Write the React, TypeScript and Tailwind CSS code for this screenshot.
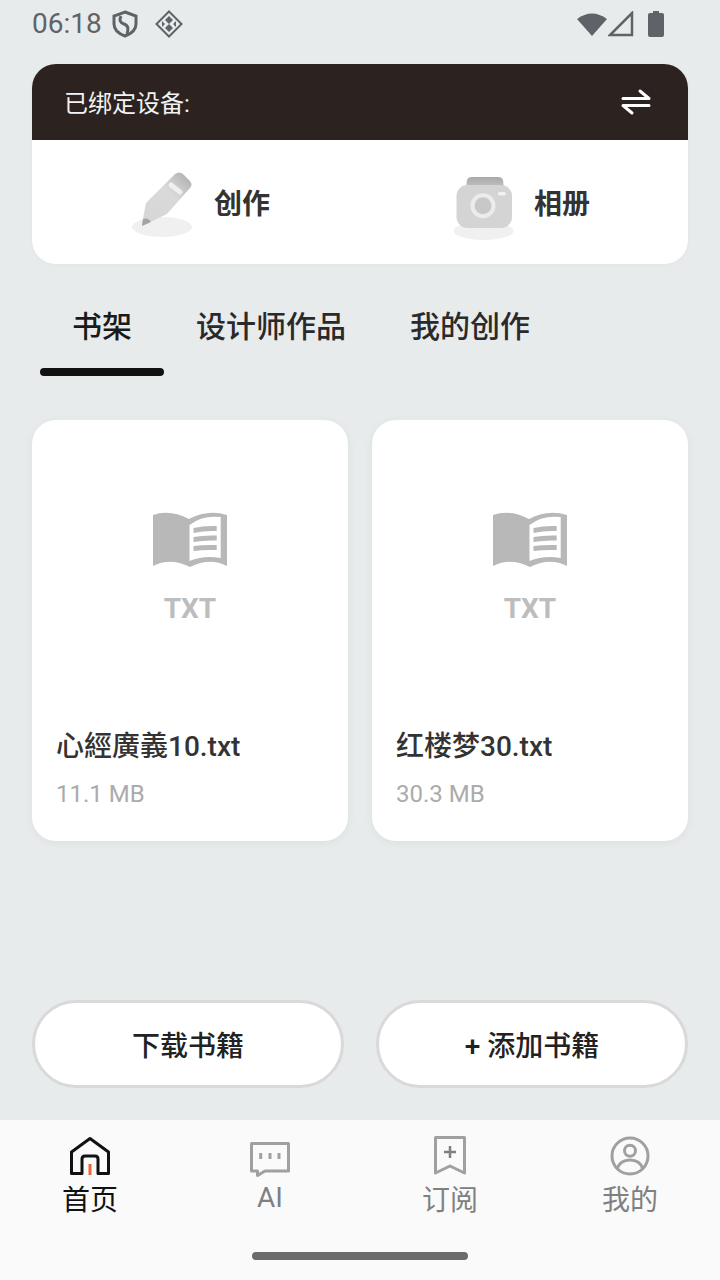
import React from 'react';

const font = { fontFamily: 'Roboto, "Noto Sans CJK SC", sans-serif' };

const PencilIcon = () => (
  <svg className="overflow-visible" width="64" height="70" viewBox="0 0 64 70">
    <defs>
      <linearGradient id="pencilBody" x1="0" y1="1" x2="1" y2="0">
        <stop offset="0" stopColor="#d6d6d6" />
        <stop offset="0.6" stopColor="#d9d9d9" />
        <stop offset="1" stopColor="#ababab" />
      </linearGradient>
    </defs>
    <ellipse cx="30" cy="60" rx="30" ry="10" fill="#f0f0f0" />
    <path d="M10 59 L10.5 54 L14 36 L43 7 Q47 4 51 7 L58 14 Q61 18 58 21 L35 47 Z" fill="url(#pencilBody)" />
    <path d="M10 59 L11 52 Q16 50 19 55 Z" fill="#a3a3a3" />
    <path d="M39 18 L48 25" stroke="#efefef" strokeWidth="5" strokeLinecap="round" />
  </svg>
);

const CameraIcon = () => (
  <svg className="overflow-visible" width="64" height="70" viewBox="0 0 64 70">
    <defs>
      <linearGradient id="cameraTop" x1="0" y1="0" x2="0" y2="1">
        <stop offset="0" stopColor="#a9a9a9" />
        <stop offset="1" stopColor="#c4c4c4" />
      </linearGradient>
    </defs>
    <ellipse cx="31.5" cy="64" rx="30" ry="9" fill="#f0f0f0" />
    <path d="M14 22 L15 13 Q16 10 20 10 L46 10 Q50 10 51 13 L52 22 Z" fill="url(#cameraTop)" />
    <rect x="4.5" y="18" width="55.5" height="43" rx="11" fill="#d4d4d4" />
    <circle cx="31" cy="38.7" r="12.5" fill="#ececec" />
    <circle cx="31" cy="38.7" r="8.5" fill="#c8c8c8" />
    <rect x="46" y="25" width="8" height="3.5" rx="1.7" fill="#f1f1f1" />
  </svg>
);

const BookIcon = () => (
  <svg width="76" height="60" viewBox="0 0 76 60">
    <path d="M1 6 Q18 0 37 10 Q56 0 75 6 L75 57 Q58 48 38 58 Q18 48 1 57 Z" fill="#b8b8b8" />
    <path d="M37.5 16 Q50 6 68.7 8 L68.7 49 Q52 46 37.5 52 Z" fill="#ffffff" />
    <path d="M41.5 19 Q52 16.5 64.7 17 L64.7 22 Q52 21.5 41.5 24 Z" fill="#b8b8b8" />
    <path d="M41.5 28 Q52 26 64.7 26.5 L64.7 31.5 Q52 31 41.5 33 Z" fill="#b8b8b8" />
    <path d="M41.5 37 Q52 35.5 64.7 36 L64.7 41 Q52 40.5 41.5 42 Z" fill="#b8b8b8" />
  </svg>
);

const BookCard = ({ name, size }: { name: string; size: string }) => (
  <div className="h-[421px] bg-white rounded-[24px] shadow-[0_2px_10px_rgba(0,0,0,0.05)] px-6 flex flex-col">
    <div className="pt-[89px] flex flex-col items-center">
      <BookIcon />
      <span className="mt-[23px] text-[28px] leading-[34px] font-bold text-[#bdbdbd]">TXT</span>
    </div>
    <p className="mt-[101px] text-[28px] leading-[40px] font-medium text-[#333333]">{name}</p>
    <p className="mt-[11px] text-[24px] leading-[32px] text-[#ababab]">{size}</p>
  </div>
);

const NavItem = ({ label, active, latin, children }: { label: string; active?: boolean; latin?: boolean; children: React.ReactNode }) => (
  <div className="flex-1 flex flex-col items-center">
    <div className="h-[44px] flex items-center justify-center">{children}</div>
    <span className={`${latin ? 'mt-0' : 'mt-[3px]'} text-[28px] leading-[38px] ${active ? 'text-[#111111]' : 'text-[#808080]'}`}>{label}</span>
  </div>
);

export default function App() {
  return (
    <div className="w-[720px] h-[1280px] bg-[#e8ebec] flex flex-col overflow-hidden" style={font}>
      {/* status bar */}
      <div className="h-[48px] pl-8 pr-[56px] flex items-center justify-between">
        <div className="flex items-center text-[#5f6368]">
          <span className="text-[28px] leading-[48px]">06:18</span>
          <svg className="ml-[10px]" width="26" height="28" viewBox="0 0 26 28" fill="none" stroke="#5f6368" strokeWidth="3">
            <path d="M13 2 L24 6 L24 14 Q24 22 13 26 Q2 22 2 14 L2 6 Z" />
            <path d="M9 6 Q6 12 12 14 Q18 16 15 24" />
          </svg>
          <svg className="ml-[17px]" width="28" height="28" viewBox="0 0 28 28" fill="none">
            <path d="M14 1.5 L26.5 14 L14 26.5 L1.5 14 Z" stroke="#5f6368" strokeWidth="2" />
            <path d="M14 6 L18 10 L14 14 L10 10 Z M14 14 L18 18 L14 22 L10 18 Z M7 11 L10 14 L7 17 Z M21 11 L18 14 L21 17 Z" fill="#5f6368" />
          </svg>
        </div>
        <div className="flex items-center">
          <svg width="32" height="26" viewBox="0 0 32 26">
            <path d="M16 25 L1 8 Q16 -3 31 8 Z" fill="#5f6368" />
          </svg>
          <svg width="26" height="26" viewBox="0 0 26 26" fill="none">
            <path d="M24 2 L24 24 L2 24 Z" stroke="#5f6368" strokeWidth="2.5" />
          </svg>
          <svg className="ml-[14px]" width="16" height="26" viewBox="0 0 16 26">
            <path d="M5 0 H11 V2 H14 Q16 2 16 4 V24 Q16 26 14 26 H2 Q0 26 0 24 V4 Q0 2 2 2 H5 Z" fill="#5f6368" />
          </svg>
        </div>
      </div>

      {/* device card */}
      <div className="mt-4 mx-8 h-[200px] bg-white rounded-[24px] overflow-hidden shadow-[0_1px_4px_rgba(0,0,0,0.03)]">
        <div className="h-[76px] bg-[#2c221f] pl-[32px] pr-[36px] flex items-center justify-between">
          <span className="mt-1 text-[24px] text-[#f2f2f2]">已绑定设备:</span>
          <svg width="32" height="28" viewBox="0 0 32 28" fill="none" stroke="#ffffff" strokeWidth="3" strokeLinecap="round" strokeLinejoin="round">
            <path d="M3 10.5 H29 L20 3" />
            <path d="M29 17.5 H3 L12 25" />
          </svg>
        </div>
        <div className="h-[124px] flex">
          <div className="w-[328px] pl-[100px] flex items-center">
            <PencilIcon />
            <span className="ml-[18px] mt-[6px] text-[28px] font-bold text-[#333333]">创作</span>
          </div>
          <div className="w-[328px] pl-[92px] flex items-center">
            <CameraIcon />
            <span className="ml-[18px] mt-[6px] text-[28px] font-bold text-[#333333]">相册</span>
          </div>
        </div>
      </div>

      {/* tabs */}
      <div className="mt-[36px] ml-[40px] flex h-[76px]">
        <div className="w-[124px] flex flex-col items-center justify-between">
          <span className="text-[30px] leading-[54px] font-medium text-[#1a1a1a]">书架</span>
          <span className="w-[124px] h-[8px] rounded-full bg-[#111111]" />
        </div>
        <span className="ml-[32px] text-[30px] leading-[54px] font-medium text-[#2a2a2a]">设计师作品</span>
        <span className="ml-[64px] text-[30px] leading-[54px] font-medium text-[#2a2a2a]">我的创作</span>
      </div>

      {/* books */}
      <div className="mt-[44px] mx-8 grid grid-cols-2 gap-6">
        <BookCard name="心經廣義10.txt" size="11.1 MB" />
        <BookCard name="红楼梦30.txt" size="30.3 MB" />
      </div>

      {/* buttons */}
      <div className="mt-[159px] mx-8 flex justify-between">
        <button className="w-[312px] h-[88px] pt-[6px] rounded-full bg-white border-[3px] border-[#d9d9d9] text-[28px] font-medium text-[#222222]">下载书籍</button>
        <button className="w-[312px] h-[88px] pt-[6px] rounded-full bg-white border-[3px] border-[#d9d9d9] text-[28px] font-medium text-[#222222]">+ 添加书籍</button>
      </div>

      {/* bottom nav */}
      <div className="mt-8 h-[160px] bg-[#fafafa] flex flex-col">
        <div className="pt-[15px] flex">
          <NavItem label="首页" active>
            <svg width="44" height="44" viewBox="0 0 44 44" fill="none">
              <path d="M3.5 38.5 V17 L22 3.5 L40.5 17 V38.5 H30 V24 Q30 21 27 21 H17 Q14 21 14 24 V38.5 Z" stroke="#111111" strokeWidth="3" strokeLinejoin="round" />
              <path d="M22 29 V40" stroke="#e76832" strokeWidth="3" />
            </svg>
          </NavItem>
          <NavItem label="AI" latin>
            <svg width="44" height="44" viewBox="0 0 44 44" fill="none">
              <path d="M3.5 8.5 H40.5 V36 H17 L9.5 40.5 V36 H3.5 Z" stroke="#a0a0a0" strokeWidth="3" strokeLinejoin="round" />
              <path d="M12.7 18 V24 M22 18 V24 M31 18 V24" stroke="#a0a0a0" strokeWidth="3" />
            </svg>
          </NavItem>
          <NavItem label="订阅">
            <svg width="44" height="44" viewBox="0 0 44 44" fill="none">
              <path d="M7.5 2.5 H36.5 V38 L22 31 L7.5 38 Z" stroke="#a0a0a0" strokeWidth="3" strokeLinejoin="round" />
              <path d="M22 11 V23 M16 17 H28" stroke="#808080" strokeWidth="2.5" />
            </svg>
          </NavItem>
          <NavItem label="我的">
            <svg width="44" height="44" viewBox="0 0 44 44" fill="none" stroke="#a0a0a0" strokeWidth="3">
              <circle cx="22" cy="21" r="18" />
              <circle cx="22" cy="15.7" r="5.5" />
              <path d="M9 34 Q12 25 22 25 Q32 25 35 34" />
            </svg>
          </NavItem>
        </div>
        <div className="mt-auto mb-5 mx-auto w-[216px] h-[8px] rounded-full bg-[#6b6b6b]" />
      </div>
    </div>
  );
}
